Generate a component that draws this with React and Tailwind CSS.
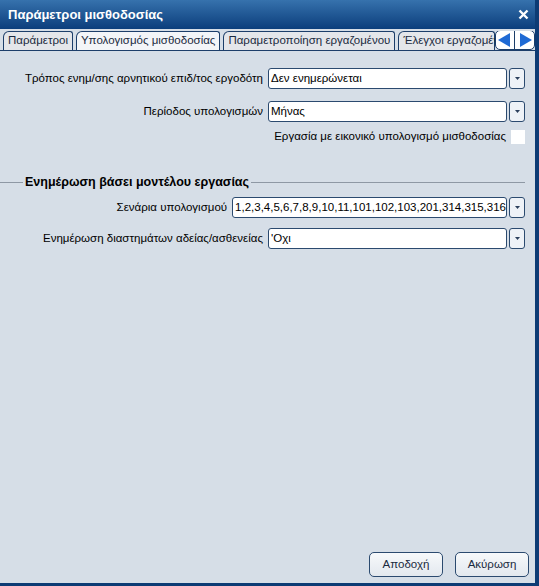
const font = { fontFamily: '"Liberation Sans", Arial, sans-serif' };

function Combo({ value }) {
  return (
    <div className="flex h-[21px] flex-1 items-stretch gap-[2px]">
      <div className="flex flex-1 items-center overflow-hidden whitespace-nowrap rounded-[3px] border border-[#2b4a6f] bg-white pl-[2px] text-[11.5px] text-black">
        {value}
      </div>
      <div className="flex w-[16px] items-center justify-center rounded-[3px] border border-[#2b4a6f] bg-[#eef2f7]">
        <svg width="7" height="4" viewBox="0 0 7 4">
          <path d="M1 0 L6 0 L3.5 3 Z" fill="#2b3f5c" />
        </svg>
      </div>
    </div>
  );
}

function Row({ label, value }) {
  return (
    <div className="flex items-center">
      <div className="w-[268px] pr-[5px] text-right text-[11.5px] text-black whitespace-nowrap">{label}</div>
      <Combo value={value} />
    </div>
  );
}

function Tab({ label, active }) {
  return (
    <div
      className={
        "flex h-[19px] items-center whitespace-nowrap rounded-tl-[6px] rounded-tr-[3px] border border-b-0 border-[#1c3e6a] px-[4px] text-[11.5px] text-[#1a2a40] " +
        (active ? "bg-[#f3f5f8]" : "bg-[#e4e6ea]")
      }
    >
      {label}
    </div>
  );
}

export default function App() {
  return (
    <div style={font} className="flex h-[586px] w-[539px] flex-col border-r-[4px] border-b-[3px] border-[#0d3b74] bg-[#d6dee7]">
      {/* title bar */}
      <div className="flex h-[29px] items-center justify-between bg-gradient-to-b from-[#3672ad] to-[#0b3e7c] pl-[8px] pr-[6px]">
        <span className="text-[13px] font-bold text-white">Παράμετροι μισθοδοσίας</span>
        <svg width="11" height="11" viewBox="0 0 11 11">
          <path d="M1.5 1.5 L9.5 9.5 M9.5 1.5 L1.5 9.5" stroke="white" strokeWidth="2.4" />
        </svg>
      </div>

      {/* tabs */}
      <div className="mt-[2px] flex h-[20px] items-end gap-[3px] overflow-hidden border-b border-[#1c3e6a] pl-[3px]">
        <Tab label="Παράμετροι" />
        <Tab label="Υπολογισμός μισθοδοσίας" active />
        <Tab label="Παραμετροποίηση εργαζομένου" />
        <div className="flex min-w-0 flex-1 items-end">
          <div className="min-w-0 flex-1 overflow-hidden">
            <Tab label="Έλεγχοι εργαζομέν" />
          </div>
          <div className="flex h-[20px] w-[40px] shrink-0 items-center justify-around rounded-[5px] border border-[#1c3e6a] bg-white">
            <svg width="13" height="14" viewBox="0 0 13 14">
              <path d="M12 0 L12 14 L0 7 Z" fill="#1f6ad4" />
            </svg>
            <div className="h-full w-px bg-[#1c3e6a]" />
            <svg width="13" height="14" viewBox="0 0 13 14">
              <path d="M1 0 L1 14 L13 7 Z" fill="#1f6ad4" />
            </svg>
          </div>
        </div>
      </div>

      {/* body */}
      <div className="flex flex-1 flex-col pr-[10px] pt-[17px]">
        <div className="flex flex-col gap-[12px]">
          <Row label="Τρόπος ενημ/σης αρνητικού επιδ/τος εργοδότη" value="Δεν ενημερώνεται" />
          <Row label="Περίοδος υπολογισμών" value="Μήνας" />
        </div>
        <div className="mt-[6px] flex items-center justify-end gap-[5px] text-[11.5px] text-black">
          <span>Εργασία με εικονικό υπολογισμό μισθοδοσίας</span>
          <div className="h-[14px] w-[14px] bg-white" />
        </div>

        {/* group header */}
        <div className="mt-[28px] flex items-center">
          <div className="h-px w-[23px] bg-[#8e98a4]" />
          <span className="px-[2px] text-[12.5px] font-bold text-black">Ενημέρωση βάσει μοντέλου εργασίας</span>
          <div className="h-px flex-1 bg-[#8e98a4]" />
        </div>

        <div className="mt-[5px] flex flex-col gap-[10px]">
          <Row label="Σενάρια υπολογισμού" value="1,2,3,4,5,6,7,8,9,10,11,101,102,103,201,314,315,316" />
          <Row label="Ενημέρωση διαστημάτων αδείας/ασθενείας" value="'Οχι" />
        </div>

        <div className="mt-auto mb-[6px] -mr-[4px] flex justify-end gap-[12px]">
          <button className="h-[25px] w-[74px] rounded-[5px] border border-[#2b4a6f] bg-gradient-to-b from-[#f7f9fb] to-[#e3e8ee] text-[11.5px] text-[#1a2a40]">
            Αποδοχή
          </button>
          <button className="h-[25px] w-[74px] rounded-[5px] border border-[#2b4a6f] bg-gradient-to-b from-[#f7f9fb] to-[#e3e8ee] text-[11.5px] text-[#1a2a40]">
            Ακύρωση
          </button>
        </div>
      </div>
    </div>
  );
}
